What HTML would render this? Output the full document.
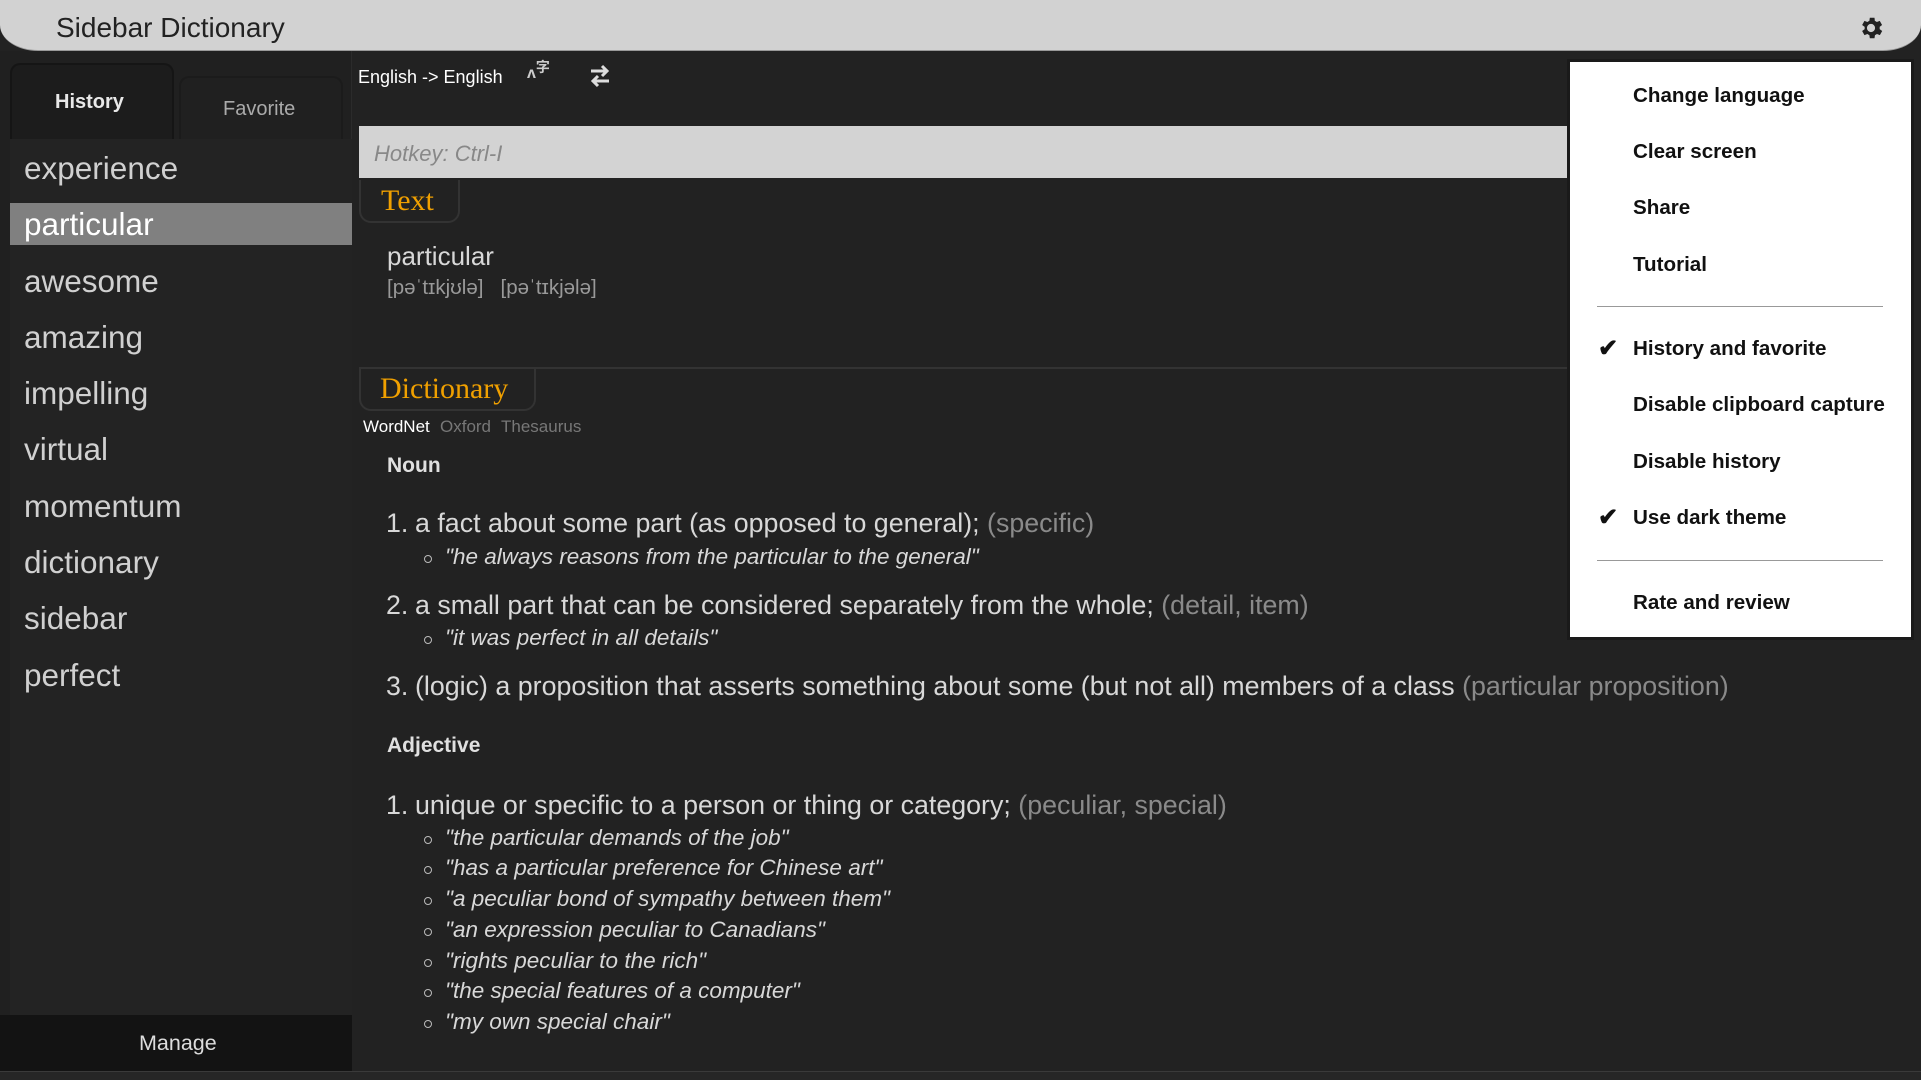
<!DOCTYPE html>
<html><head><meta charset="utf-8">
<style>
*{margin:0;padding:0;box-sizing:border-box}
body{width:1921px;height:1080px;overflow:hidden;background:#222222;font-family:"Liberation Sans","Noto Sans CJK SC",sans-serif;position:relative;color:#ddd}
.a{position:absolute;white-space:nowrap;line-height:1}
#title{position:absolute;left:0;top:0;width:1921px;height:51px;background:#d2d2d2;border-radius:0 0 38px 38px/0 0 26px 26px;border-bottom:1px solid #999}
#side{position:absolute;left:0;top:51px;width:352px;height:1020px;background:#202020;border-right:1px solid #2b2b2b}
.tab{position:absolute;background:#1e1e1e;border:2px solid #151515;border-bottom:none;border-radius:10px 10px 0 0}
.li{position:absolute;left:24px;font-size:31.5px;color:#d0d0d0;line-height:1}
.ex{position:absolute;left:445px;font-size:22.5px;font-style:italic;color:#d8d8d8;line-height:1}
.ex:before{content:"";position:absolute;left:-21px;top:9px;width:6px;height:6px;border:1.5px solid #bbb;border-radius:50%}
.df{position:absolute;left:386px;font-size:26.8px;color:#d8d8d8;line-height:1}
.df .g{color:#8a8a8a}
.df b{font-weight:normal;display:inline-block;width:29px}
.mi{position:absolute;left:1633px;font-size:20.6px;font-weight:bold;color:#111;line-height:1}
.ck{position:absolute;left:1598px;font-size:24px;color:#111;line-height:1;font-weight:bold}
.sep{position:absolute;left:1597px;width:286px;height:1px;background:#999}
</style></head><body>
<div id="title"></div>
<div class="a" style="left:56px;top:14px;font-size:28px;color:#222">Sidebar Dictionary</div>
<svg style="position:absolute;left:1857px;top:14px" width="28" height="28" viewBox="0 0 24 24"><path fill="#222" d="M19.4 13a7.5 7.5 0 000-2l2.1-1.6-2-3.5-2.5 1a7 7 0 00-1.700-1L15 3.2h-4l-.4 2.7a7 7 0 00-1.7 1l-2.5-1-2 3.5L6.6 11a7.5 7.5 0 000 2l-2.2 1.6 2 3.5 2.5-1a7 7 0 001.7 1l.4 2.7h4l.4-2.7a7 7 0 001.7-1l2.5 1 2-3.5zM12 15.5a3.5 3.5 0 110-7 3.5 3.5 0 010 7z"/></svg>

<div id="side"></div>
<div class="tab" style="left:10px;top:63px;width:164px;height:76px;background:#1c1c1c"></div>
<div class="tab" style="left:179px;top:76px;width:164px;height:63px;border-color:#1b1b1b;background:#202020"></div>
<div class="a" style="left:55px;top:92px;font-size:20px;font-weight:bold;color:#e8e8e8">History</div>
<div class="a" style="left:223px;top:99px;font-size:20px;color:#aaa">Favorite</div>
<div style="position:absolute;left:10px;top:139px;width:342px;height:876px;background:#232323"></div>
<div style="position:absolute;left:10px;top:203px;width:342px;height:42px;background:#808080"></div>
<div class="li" style="top:153px">experience</div>
<div class="li" style="top:209px;color:#fff">particular</div>
<div class="li" style="top:266px">awesome</div>
<div class="li" style="top:322px">amazing</div>
<div class="li" style="top:378px">impelling</div>
<div class="li" style="top:434px">virtual</div>
<div class="li" style="top:491px">momentum</div>
<div class="li" style="top:547px">dictionary</div>
<div class="li" style="top:603px">sidebar</div>
<div class="li" style="top:660px">perfect</div>
<div style="position:absolute;left:0;top:1015px;width:352px;height:56px;background:#131313"></div>
<div class="a" style="left:139px;top:1033px;font-size:21.5px;color:#ddd">Manage</div>
<div style="position:absolute;left:0;top:1071px;width:1921px;height:9px;background:#262626;border-top:1px solid #3a3a3a"></div>

<div class="a" style="left:358px;top:68px;font-size:18px;color:#fff">English -&gt; English</div>
<div class="a" style="left:527px;top:66px;font-size:16px;color:#ccc;font-weight:bold">ᴧ<span style="font-size:14px;position:relative;top:-6px">字</span></div>
<svg style="position:absolute;left:587px;top:64px" width="26" height="24" viewBox="0 0 26 24"><path d="M4 7h16M15 2l5 5-5 5M22 17H6M11 12l-5 5 5 5" stroke="#ddd" stroke-width="3" fill="none"/></svg>

<div style="position:absolute;left:359px;top:126px;width:1208px;height:52px;background:#d3d3d3"></div>
<div class="a" style="left:374px;top:143px;font-size:22px;font-style:italic;color:#888">Hotkey: Ctrl-I</div>
<div style="position:absolute;left:359px;top:180px;width:101px;height:43px;border:2px solid #333;border-top:none;border-radius:0 0 12px 12px"></div>
<div class="a" style="left:381px;top:186px;font-size:30px;font-family:'Liberation Serif',serif;color:#f0a000">Text</div>
<div class="a" style="left:387px;top:243px;font-size:26px;color:#d8d8d8">particular</div>
<div class="a" style="left:387px;top:278px;font-size:20.5px;color:#999">[pəˈtɪkjʊlə]&nbsp;&nbsp; [pəˈtɪkjələ]</div>
<div style="position:absolute;left:359px;top:367px;width:1208px;height:2px;background:#333"></div>
<div style="position:absolute;left:359px;top:367px;width:177px;height:44px;border:2px solid #333;border-top:none;border-radius:0 0 12px 12px"></div>
<div class="a" style="left:380px;top:374px;font-size:30px;font-family:'Liberation Serif',serif;color:#f0a000">Dictionary</div>
<div class="a" style="left:363px;top:418px;font-size:17px;color:#fff">WordNet</div>
<div class="a" style="left:440px;top:418px;font-size:17px;color:#777">Oxford</div>
<div class="a" style="left:501px;top:418px;font-size:17px;color:#777">Thesaurus</div>
<div class="a" style="left:387px;top:455px;font-size:21px;font-weight:bold;color:#e0e0e0">Noun</div>
<div class="df" style="top:510px"><b>1.</b>a fact about some part (as opposed to general); <span class="g">(specific)</span></div>
<div class="ex" style="top:546px">"he always reasons from the particular to the general"</div>
<div class="df" style="top:592px"><b>2.</b>a small part that can be considered separately from the whole; <span class="g">(detail, item)</span></div>
<div class="ex" style="top:627px">"it was perfect in all details"</div>
<div class="df" style="top:673px"><b>3.</b>(logic) a proposition that asserts something about some (but not all) members of a class <span class="g">(particular proposition)</span></div>
<div class="a" style="left:387px;top:735px;font-size:21px;font-weight:bold;color:#e0e0e0">Adjective</div>
<div class="df" style="top:792px"><b>1.</b>unique or specific to a person or thing or category; <span class="g">(peculiar, special)</span></div>
<div class="ex" style="top:827px">"the particular demands of the job"</div>
<div class="ex" style="top:857px">"has a particular preference for Chinese art"</div>
<div class="ex" style="top:888px">"a peculiar bond of sympathy between them"</div>
<div class="ex" style="top:919px">"an expression peculiar to Canadians"</div>
<div class="ex" style="top:950px">"rights peculiar to the rich"</div>
<div class="ex" style="top:980px">"the special features of a computer"</div>
<div class="ex" style="top:1011px">"my own special chair"</div>

<div style="position:absolute;left:1567px;top:59px;width:347px;height:581px;background:#fff;border:3px solid #1a1a1a"></div>
<div class="mi" style="top:86px">Change language</div>
<div class="mi" style="top:142px">Clear screen</div>
<div class="mi" style="top:198px">Share</div>
<div class="mi" style="top:255px">Tutorial</div>
<div class="sep" style="top:306px"></div>
<div class="ck" style="top:337px">✔</div>
<div class="mi" style="top:339px">History and favorite</div>
<div class="mi" style="top:395px">Disable clipboard capture</div>
<div class="mi" style="top:452px">Disable history</div>
<div class="ck" style="top:506px">✔</div>
<div class="mi" style="top:508px">Use dark theme</div>
<div class="sep" style="top:560px"></div>
<div class="mi" style="top:593px">Rate and review</div>
</body></html>
